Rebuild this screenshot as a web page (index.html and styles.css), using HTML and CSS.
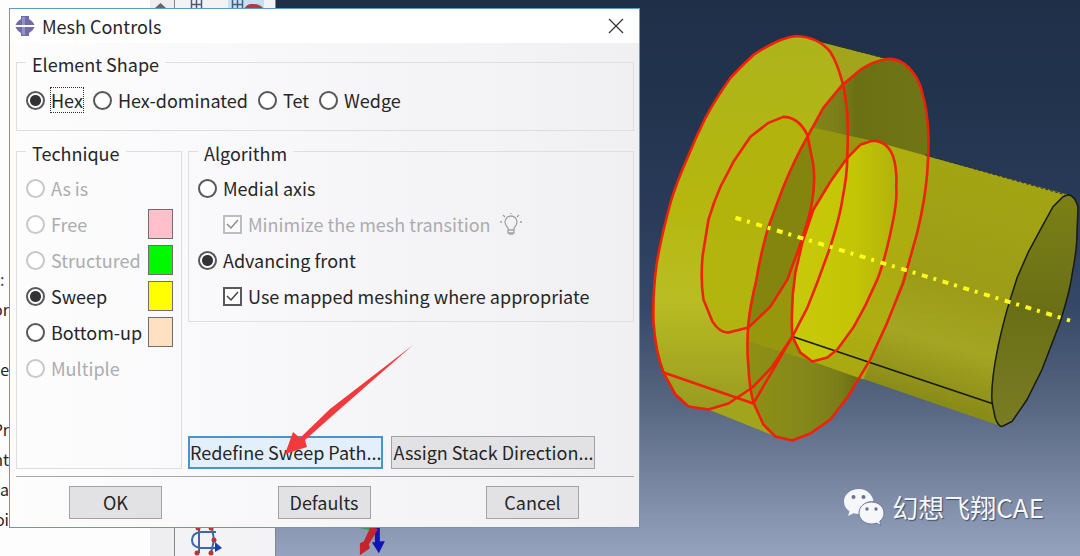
FILE: index.html
```html
<!DOCTYPE html>
<html lang="en">
<head>
<meta charset="utf-8">
<title>Mesh Controls</title>
<link rel="stylesheet" href="styles.css">
</head>
<body>
<div class="app">
  <div class="tree">
    <ul class="tree-list">
      <li class="link">:</li><li>or</li><li></li><li>e</li><li></li><li>Pr</li><li>nt</li><li>a</li><li>oi</li>
    </ul>
  </div>
  <div class="scrollbar"><svg width="24" height="10" viewBox="0 0 24 10"><path d="M5 8 10.500 3 16 8Z" fill="#666"/></svg></div>
  <div class="toolbox">
    <svg width="101" height="9" viewBox="0 0 101 9">
      <rect x="53" width="36" height="9" fill="#c3e0f4"/>
      <path d="M16.500 0V9M21.500 0V9M26.500 0V9M16 4.500H27M57.500 0V9M62.500 0V9M67.500 0V9M57 4.500H68" stroke="#4e5a7c" stroke-width="1.500" fill="none"/>
      <path d="M69 9q3-5 7-5t3 0q6 0 10 5Z" fill="#b83b3b"/>
    </svg>
    <svg width="101" height="30" viewBox="0 0 101 30">
      <path d="M41 6H26q-9 1-9 8t9 8H42M24 2V27M37 2 39 14 36 27" fill="none" stroke="#3b68a8" stroke-width="2"/>
      <path d="M40 16 47 22 40 26Z" fill="#173fae"/>
      <g fill="#bd3434"><circle cx="23" cy="2" r="2.500"/><circle cx="36" cy="2" r="2.500"/><circle cx="39" cy="14" r="2.500"/><circle cx="22" cy="27" r="2.500"/><circle cx="36" cy="27" r="2.500"/></g>
    </svg>
  </div>
  <main class="viewport">
    <svg class="model" viewBox="275 0 805 556" preserveAspectRatio="xMaxYMin meet" role="img" aria-label="Swept part">
      <defs>
        <linearGradient id="side" x1="0" y1="0" x2="0" y2="1"><stop offset="0" stop-color="#adb41c"/><stop offset=".45" stop-color="#b5b70e"/><stop offset=".7" stop-color="#babd22"/><stop offset="1" stop-color="#989b20"/></linearGradient>
        <linearGradient id="back" x1="0" y1="0" x2="1" y2="0"><stop offset="0" stop-color="#8e9014"/><stop offset=".3" stop-color="#85881a"/><stop offset=".5" stop-color="#7b7e19"/><stop offset=".6" stop-color="#6b7014"/><stop offset="1" stop-color="#707515"/></linearGradient>
        <linearGradient id="shaft" gradientUnits="userSpaceOnUse" x1="900" y1="155" x2="840" y2="375"><stop offset="0" stop-color="#a3a413"/><stop offset=".5" stop-color="#9c9c18"/><stop offset=".75" stop-color="#a4a522"/><stop offset="1" stop-color="#8a8c18"/></linearGradient>
        <linearGradient id="glow" x1="0" y1="0" x2="1" y2="0"><stop offset="0" stop-color="#c7c90a"/><stop offset=".6" stop-color="#c3c505"/><stop offset="1" stop-color="#b2b30c"/></linearGradient>
        <linearGradient id="end" x1="0" y1="0" x2="0" y2="1"><stop offset="0" stop-color="#7c8016"/><stop offset=".5" stop-color="#6a6f16"/><stop offset="1" stop-color="#7a7c24"/></linearGradient>
        <path id="rimFront" d="M796 36 C782 37 768 45 753 55 Q742 65 730 78 Q715 99 705 118 Q695 138 687 158 Q676 183 670 203 Q660 240 656 265 Q652 295 653 323 Q655 352 663 373 L675 395 688 407 708 410 728 404 752 388 772 367 792 337 807 308 818 280 830 247 Q840 215 842 200 Q847 175 847 157 Q848 130 847 113 Q845 93 842 82 Q837 63 830 52 Q818 37 796 36Z"/>
        <path id="rimBack" d="M887 59 Q873 61 860 70 L842 85 823 108 807 137 Q794 160 783 187 L768 227 Q760 255 756 280 Q750 305 748 323 Q746 347 748 367 Q749 388 753 403 L763 425 775 437 792 441 810 434 830 420 847 398 870 360 887 323 903 283 917 233 Q925 200 927 173 Q929 150 928 130 Q927 112 923 97 Q920 82 913 73 Q902 58 887 59Z"/>
        <path id="boreFront" d="M783 117 768 123 750 137 733 162 720 187 Q713 203 708 220 L702 257 Q700 282 703 300 L712 322 Q719 333 728 333 L748 328 770 307 787 280 798 250 Q810 216 812 200 Q815 182 813 165 L807 135 Q798 117 783 117Z"/>
        <path id="boreBack" d="M872 141 860 145 847 158 830 182 813 210 802 243 795 273 Q790 305 792 337 L800 353 812 362 827 358 837 350 853 328 865 306 877 280 Q885 260 893 220 Q897 200 896 187 Q897 170 893 157 Q887 141 872 141Z"/>
        <path id="endFace" d="M1068 195 1063 197 1053 207 1042 227 1028 253 1017 278 1007 310 Q996 350 993 377 Q991 393 992 403 L995 418 Q998 427 1002 427 L1012 422 1027 400 1042 370 1060 323 Q1070 291 1072 275 Q1077 250 1077 233 L1078 207 Q1075 196 1068 195Z"/>
        <clipPath id="inBack"><use href="#rimBack"/></clipPath>
      </defs>
      <path d="M796 36 887 59 830 250 775 437 708 410Z" fill="#a2a41b"/>
      <use href="#rimFront" fill="url(#side)"/>
      <use href="#boreFront" fill="#b2b30b" fill-opacity=".8"/>
      <use href="#rimBack" fill="url(#back)"/>
      <g clip-path="url(#inBack)">
        <path d="M800 125 872 141 840 200 800 250 793 337 812 362 745 341 745 300Z" fill="#96970d"/>
        <use href="#boreFront" fill="#83850f"/>
      </g>
      <path d="M872 141 900 149 1068 195 1002 427 812 362 793 337Z" fill="url(#shaft)"/>
      <path d="M872 141 926 156 926 175 916 237 886 326 863 380 812 362 793 337Z" fill="#b1b20d" fill-opacity=".75"/>
      <use href="#boreBack" fill="url(#glow)"/>
      <use href="#endFace" fill="url(#end)" stroke="#171a0c" stroke-width="1.500"/>
      <path d="M812 39 887 59M925 155 1065 195" stroke="#30351a" stroke-dasharray="3 2" fill="none"/>
      <path d="M792 337 992 404" stroke="#171a0c" stroke-width="1.500"/>
      <g fill="none" stroke="#ee2208" stroke-width="2.600" stroke-linejoin="round">
        <use href="#rimFront"/><use href="#rimBack"/><use href="#boreFront"/><use href="#boreBack"/>
        <path d="M663 373 753 404 792 337"/>
      </g>
      <path d="M735 218 1070 321" stroke="#fbfb1c" stroke-width="4" stroke-dasharray="6 6 3 6.700"/>
      <path d="M349 527 376 532 374 527Z" fill="#2a9f4a"/>
      <path d="M374 527H379V542H384L378 554 371 543H374Z" fill="#1215b4"/>
      <path d="M370 527 377 530 368 545 369 549 359 556 359 544 363 542Z" fill="#c5242a"/>
    </svg>
    <div class="watermark">
      <svg width="42" height="38" viewBox="0 0 42 38">
        <path d="M16 1C7.500 1 1 6.500 1 13.500c0 4 2 7.500 5.500 9.800L5 28l5.500-2.800c2 .6 4 .8 6 .8 0-8 6-13 14-13C29 5.500 23 1 16 1Z" fill="#f5f7fa"/>
        <path d="M28.500 14C21 14 16 19 16 25s5.500 11 12.500 11c1.700 0 3.500-.3 5-.9L38 37.500l-1.300-4.200C39.300 31.300 41 28.500 41 25c0-6-5.500-11-12.500-11Z" fill="#f5f7fa" stroke="#6d7c96"/>
        <g fill="#66758f"><circle cx="10.500" cy="9" r="2"/><circle cx="20.500" cy="9" r="2"/><circle cx="24" cy="21" r="1.700"/><circle cx="33" cy="21" r="1.700"/></g>
      </svg>
      <span lang="zh">幻想飞翔CAE</span>
    </div>
  </main>
</div>

<form class="dialog" role="dialog" aria-labelledby="title">
  <header class="titlebar">
    <svg width="20" height="20" viewBox="0 0 20 20"><path d="M6 0h8v3q4 2 6 7-2 5-6 7v3H6v-3Q2 15 0 10 2 5 6 3Z" fill="#706da9"/><path d="M7 1h3v18H7Z" fill="#9593c6"/><path d="M0 10H20" stroke="#fff" stroke-width="2"/></svg>
    <h1 id="title">Mesh Controls</h1>
    <button type="button" class="close" aria-label="Close"><svg width="16" height="16" viewBox="0 0 16 16"><path d="M1 1 15 15M15 1 1 15" stroke="#333" stroke-width="1.200"/></svg></button>
  </header>
  <div class="body">
    <fieldset class="group shape">
      <legend>Element Shape</legend>
      <div class="inline">
        <label class="choice"><input type="radio" name="shape" checked><span class="focused">Hex</span></label>
        <label class="choice"><input type="radio" name="shape"><span>Hex-dominated</span></label>
        <label class="choice"><input type="radio" name="shape"><span>Tet</span></label>
        <label class="choice"><input type="radio" name="shape"><span>Wedge</span></label>
      </div>
    </fieldset>
    <div class="columns">
      <fieldset class="group">
        <legend>Technique</legend>
        <div class="row"><label class="choice"><input type="radio" name="tech" disabled><span>As is</span></label></div>
        <div class="row"><label class="choice"><input type="radio" name="tech" disabled><span>Free</span></label><i class="swatch pink"></i></div>
        <div class="row"><label class="choice"><input type="radio" name="tech" disabled><span>Structured</span></label><i class="swatch green"></i></div>
        <div class="row"><label class="choice"><input type="radio" name="tech" checked><span>Sweep</span></label><i class="swatch yellow"></i></div>
        <div class="row"><label class="choice"><input type="radio" name="tech"><span>Bottom-up</span></label><i class="swatch bisque"></i></div>
        <div class="row"><label class="choice"><input type="radio" name="tech" disabled><span>Multiple</span></label></div>
      </fieldset>
      <div class="right">
        <fieldset class="group algorithm">
          <legend>Algorithm</legend>
          <div class="row"><label class="choice"><input type="radio" name="algo"><span>Medial axis</span></label></div>
          <div class="row sub"><label class="choice"><input type="checkbox" checked disabled><span>Minimize the mesh transition</span></label>
            <svg width="22" height="22" viewBox="0 0 22 22" fill="none" stroke="#a2a2a4" stroke-width="1.300"><path d="M8 15Q5 12 5 9a6 6 0 0 1 12 0q0 3-3 6v5H8ZM8 17h6M11 0v1M3 2l2 2M19 2l-2 2M0 9h2M20 9h2M9 21h4"/></svg></div>
          <div class="row"><label class="choice"><input type="radio" name="algo" checked><span>Advancing front</span></label></div>
          <div class="row sub"><label class="choice"><input type="checkbox" checked><span>Use mapped meshing where appropriate</span></label></div>
        </fieldset>
        <div class="actions">
          <button type="button" class="btn default">Redefine Sweep Path...</button>
          <button type="button" class="btn">Assign Stack Direction...</button>
        </div>
      </div>
    </div>
    <footer class="footer">
      <button type="submit" class="btn">OK</button>
      <button type="reset" class="btn">Defaults</button>
      <button type="button" class="btn">Cancel</button>
    </footer>
  </div>
  <svg class="pointer" width="130" height="112" viewBox="284 344 130 112" aria-hidden="true"><path d="M285 454 293 432 300 438 330 409 413 345 332 416 305 440 307 447Z" fill="#f23a3e"/></svg>
</form>
</body>
</html>
```
FILE: styles.css
```css
* { box-sizing: border-box; }

body {
  margin: 0;
  font: 18px/24px "Noto Sans CJK SC", "Noto Sans", sans-serif;
  color: #262628;
  overflow: hidden;
}

.app {
  display: grid;
  grid-template-columns: 150px 24px 102px 1fr;
  height: 100vh;
}

.tree { background: #fdfdfe; }

.tree-list {
  list-style: none;
  width: 9px;
  margin: 0;
  padding: 264px 0 0;
  font-size: 16px;
  line-height: 30px;
}

.tree-list li {
  display: flex;
  justify-content: flex-end;
  height: 30px;
}

.tree-list .link {
  justify-content: flex-start;
  color: #2d4a8a;
}

.scrollbar { background: #eeeef0; }

.toolbox {
  display: flex;
  flex-direction: column;
  justify-content: space-between;
  background: #f3f3f5;
  border: solid #85858c;
  border-width: 0 1px;
}

.scrollbar svg,
.toolbox svg { display: block; }

.viewport {
  position: relative;
  background: linear-gradient(#1f2f48, #23344f 20%, #293b59 38%, #354868 55%, #56657f 72%, #7886a1 87%, #95a3be);
}

.model {
  display: block;
  width: 100%;
  height: 100%;
}

.watermark {
  position: absolute;
  right: 36px;
  bottom: 30px;
  display: flex;
  align-items: center;
  gap: 7px;
  color: #f5f7fa;
  font-size: 26px;
  line-height: 38px;
  text-shadow: 1px 1px 1px #3f4c64;
}

.dialog {
  position: absolute;
  left: 9px;
  top: 8px;
  width: 631px;
  border: 1px solid #5d9cc4;
  background: linear-gradient(90deg, #fdfdfe, #f8f8fa 40%, #f0f0f2);
}

.titlebar {
  display: flex;
  align-items: center;
  gap: 7px;
  height: 34px;
  padding: 0 15px 0 5px;
  background: #fff;
}

.titlebar h1 {
  flex: 1;
  margin: 0;
  font-size: 18px;
  font-weight: 400;
}

.close {
  display: flex;
  padding: 0;
  border: 0;
  background: none;
}

.body { padding: 7px 5px 8px 6px; }

.group {
  min-width: 0;
  margin: 0;
  padding: 0 8px 0 9px;
  border: 1px solid #dedee1;
}

legend {
  padding: 4px 6px 0;
  line-height: 20px;
}

.shape { height: 81px; }

.inline {
  display: flex;
  gap: 10px;
  padding-top: 14px;
}

.choice {
  display: flex;
  align-items: center;
  gap: 6px;
  white-space: nowrap;
}

.focused { outline: 1px dotted #333; }

input {
  appearance: none;
  flex: none;
  width: 19px;
  height: 19px;
  margin: 0;
  border: 2px solid #58585b;
  background: #fff;
}

input[type="radio"] { border-radius: 50%; }

input[type="radio"]:checked {
  background: radial-gradient(circle, #333335 5px, #fff 6px);
}

input[type="checkbox"]:checked {
  background: #fff url("data:image/svg+xml,%3Csvg xmlns='http://www.w3.org/2000/svg' viewBox='0 0 15 15'%3E%3Cpath d='M2 7l4 4 7-8' fill='none' stroke='%23444' stroke-width='1.500'/%3E%3C/svg%3E");
}

input:disabled {
  border-color: #c8c8ca;
}

input[type="checkbox"]:disabled { opacity: .6; border-color: #98989a; }

input:disabled + span { color: #acacaf; }

.columns {
  display: grid;
  grid-template-columns: 166px 1fr;
  gap: 6px;
  margin-top: 8px;
}

.row {
  display: flex;
  align-items: center;
  justify-content: space-between;
  height: 36px;
}

legend + .row { margin-top: 7px; }

.swatch {
  width: 25px;
  height: 30px;
  border: 1px solid #6e6e70;
}

.pink { background: #ffc0cb; }
.green { background: #00f800; }
.yellow { background: #ffff00; }
.bisque { background: #ffe0c0; }

.sub {
  justify-content: flex-start;
  gap: 9px;
  padding-left: 25px;
}

.right {
  display: flex;
  flex-direction: column;
  justify-content: space-between;
  min-height: 330px;
}

.algorithm { height: 183px; }

.actions {
  display: flex;
  gap: 8px;
}

.btn {
  height: 33px;
  min-width: 93px;
  padding: 0 1px 2px;
  border: 1px solid #a3a3a6;
  background: #e2e2e4;
  color: inherit;
  font: inherit;
  white-space: nowrap;
}

.default {
  padding: 0 0 2px;
  border: 2px solid #4795cf;
  background: #e3f0fb;
}

.footer {
  display: flex;
  justify-content: space-between;
  margin-top: 7px;
  padding: 9px 55px 0 53px;
  border-top: 1px solid #a6a6a9;
}

.pointer {
  position: absolute;
  left: 274px;
  top: 335px;
  pointer-events: none;
}
```
